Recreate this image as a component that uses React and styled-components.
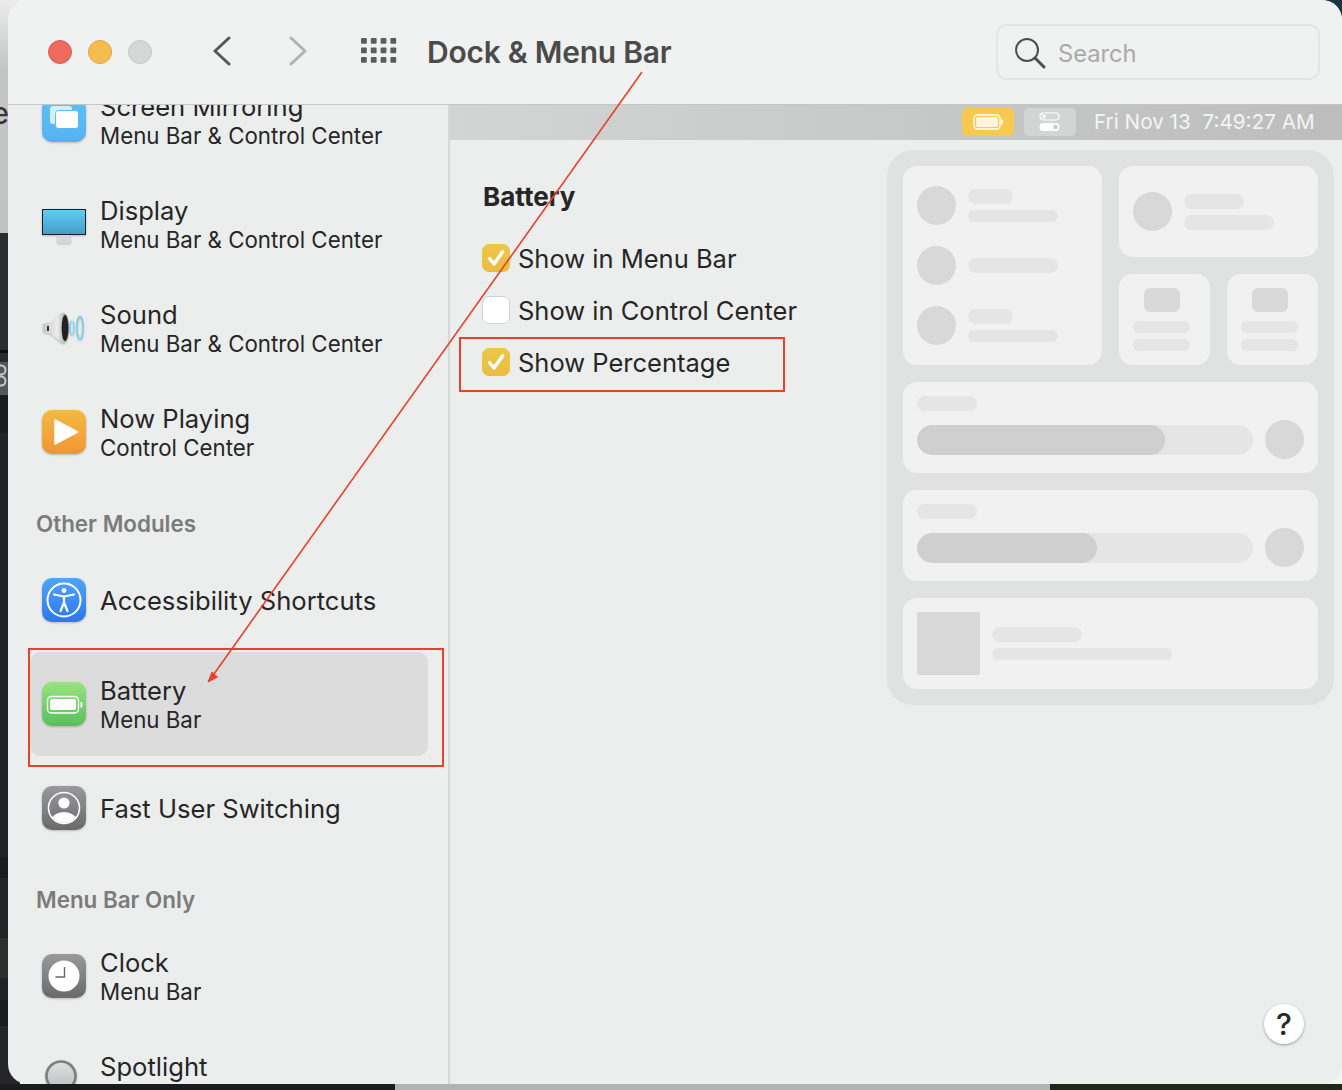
import styled, { createGlobalStyle } from "styled-components"

const GlobalStyle = createGlobalStyle`
  html, body {
    margin: 0;
    padding: 0;
    background: #1f1f21;
    font-family: Inter, "Noto Sans", sans-serif;
    -webkit-font-smoothing: antialiased;
  }
  * {
    box-sizing: border-box;
  }
`

const Desktop = styled.div`
  position: relative;
  width: 1342px;
  height: 1090px;
  overflow: hidden;
  padding-left: 8px;
  background: linear-gradient(225deg, #1c3440 0, #1c3440 24px, #f4f4f4 24px);
`

const BackdropLeft = styled.div`
  position: absolute;
  left: 0;
  top: 0;
  bottom: 0;
  width: 20px;
  display: flex;
  flex-direction: column;
`

const BackdropBand = styled.div`
  height: ${(p) => p.$h}px;
  background: ${(p) => p.$bg};
  flex: ${(p) => (p.$grow ? 1 : "none")};
  overflow: hidden;
`

const StrayLetter = styled.span`
  display: block;
  margin: 96px 0 0 -9px;
  font-size: 31px;
  line-height: 34px;
  color: #333;
`

const BackdropBottom = styled.div`
  position: absolute;
  left: 0;
  right: 0;
  bottom: 0;
  height: 6px;
  display: flex;
`

const BottomPiece = styled.div`
  width: ${(p) => (p.$w ? `${p.$w}px` : "auto")};
  flex: ${(p) => (p.$w ? "none" : 1)};
  background: ${(p) => p.$bg};
`

const Window = styled.div`
  position: relative;
  width: 1334px;
  height: 1084px;
  border-radius: 20px;
  overflow: hidden;
  background: #eceeed;
  display: flex;
  flex-direction: column;
  color: #262626;
`

const TitleBar = styled.header`
  height: 105px;
  flex: none;
  display: flex;
  align-items: center;
  background: #f0f2f1;
  border-bottom: 1px solid #c4c5c5;
  padding: 0 22px 1px 40px;
`

const TrafficLights = styled.div`
  display: flex;
  gap: 16px;
  margin-right: 60px;
`

const Light = styled.span`
  width: 24px;
  height: 24px;
  border-radius: 50%;
  background: ${(p) => p.$color};
  border: 1px solid ${(p) => p.$edge};
`

const NavIcon = styled.svg`
  display: block;
  flex: none;
  margin-top: -2px;
  margin-right: ${(p) => p.$gap}px;
`

const WindowTitle = styled.h1`
  margin: 0;
  font-size: 30px;
  font-weight: 600;
  color: #4b4b4b;
  letter-spacing: -0.25px;
`

const SearchBox = styled.div`
  margin-left: auto;
  width: 324px;
  height: 56px;
  margin-top: 1px;
  border: 2px solid #e4e6e5;
  border-radius: 11px;
  display: flex;
  align-items: center;
  padding: 2px 0 0 16px;
  gap: 12px;
  color: #a9a9a9;
  font-size: 23.7px;
`

const Body = styled.div`
  flex: 1;
  min-height: 0;
  display: flex;
`

const Sidebar = styled.nav`
  width: 442px;
  flex: none;
  overflow: hidden;
  border-right: 2px solid #d6d8d7;
`

const SidebarList = styled.div`
  margin-top: -37px;
`

const Row = styled.div`
  height: 104px;
  margin: 0 20px 0 22px;
  padding-left: 12px;
  border-radius: 10px;
  display: flex;
  align-items: center;
  gap: 14px;
  background: ${(p) => (p.$active ? "#dcdcdc" : "transparent")};
`

const RowIcon = styled.svg`
  display: block;
  flex: none;
  width: 44px;
  height: 44px;
  overflow: visible;
  filter: drop-shadow(0 1px 1px rgba(0, 0, 0, 0.22));
`

const RowText = styled.div`
  display: flex;
  flex-direction: column;
`

const RowTitle = styled.div`
  font-size: 25.6px;
  line-height: 32px;
  padding-top: 1px;
  color: #262626;
`

const RowSub = styled.div`
  font-size: 22.3px;
  line-height: 27px;
  margin: -1px 0 1px;
  color: #262626;
`

const GroupLabel = styled.div`
  height: 64px;
  padding: 26px 0 0 28px;
  font-size: 22.4px;
  line-height: 28px;
  font-weight: 600;
  color: #7a7b7b;
`

const Main = styled.main`
  flex: 1;
  min-width: 0;
  display: flex;
  flex-direction: column;
`

const MenuStrip = styled.div`
  height: 35px;
  flex: none;
  display: flex;
  align-items: center;
  padding: 0 0 2px 512px;
  background: linear-gradient(90deg, #d3d5d4, #bcbdbc);
  color: #f5f5f5;
  font-size: 20.7px;
`

const StripChip = styled.div`
  width: 52px;
  height: 28px;
  border-radius: 5px;
  margin-right: ${(p) => p.$gap}px;
  background: ${(p) => p.$bg};
  display: flex;
  align-items: center;
  justify-content: center;
`

const StripClock = styled.div`
  white-space: pre;
`

const Content = styled.div`
  flex: 1;
  min-height: 0;
  display: flex;
  padding: 10px 8px 0 32px;
`

const Settings = styled.section`
  flex: 1;
  padding-top: 29px;
`

const SectionTitle = styled.h2`
  margin: 0 0 17px 1px;
  font-size: 26px;
  line-height: 36px;
  font-weight: 700;
  color: #262626;
`

const CheckRow = styled.label`
  height: 52px;
  display: flex;
  align-items: center;
  gap: 8px;
  font-size: 25.5px;
  color: #262626;
`

const CheckBox = styled.span`
  width: 28px;
  height: 28px;
  border-radius: 7px;
  flex: none;
  display: flex;
  align-items: center;
  justify-content: center;
  background: ${(p) => (p.$on ? "linear-gradient(#edc74a, #eabd42)" : "#fff")};
  border: ${(p) => (p.$on ? "none" : "1px solid #d0d1d1")};
`

const Preview = styled.aside`
  width: 447px;
  height: 555px;
  flex: none;
  padding: 16px;
  border-radius: 26px;
  background: #e0e2e1;
  display: flex;
  flex-direction: column;
  gap: 17px;
`

const PreviewTop = styled.div`
  display: flex;
  gap: 17px;
`

const PreviewColumn = styled.div`
  width: 199px;
  display: flex;
  flex-direction: column;
  gap: 17px;
`

const PreviewRow = styled.div`
  display: flex;
  gap: 17px;
`

const Card = styled.div`
  background: #f1f1f1;
  border-radius: 14px;
  width: ${(p) => (p.$w ? `${p.$w}px` : "auto")};
  height: ${(p) => p.$h || 91}px;
  padding: 14px;
`

const NetworkCard = styled(Card)`
  display: flex;
  flex-direction: column;
  justify-content: space-between;
  padding: 20px 14px;
`

const CardLine = styled.div`
  display: flex;
  align-items: center;
  gap: 12px;
`

const ControlCard = styled(Card)`
  display: flex;
  align-items: center;
  gap: 12px;
  padding: 0 14px;
`

const Dot = styled.div`
  width: 39px;
  height: 39px;
  border-radius: 50%;
  background: #d8d8d8;
  flex: none;
`

const PillStack = styled.div`
  display: flex;
  flex-direction: column;
  gap: 6px;
`

const Pill = styled.div`
  width: ${(p) => p.$w}px;
  height: ${(p) => p.$h || 15}px;
  border-radius: 8px;
  background: #e5e5e5;
`

const TileCard = styled(Card)`
  padding: 14px 0 0 14px;
`

const Tile = styled.div`
  width: 36px;
  height: 24px;
  border-radius: 6px;
  background: #d8d8d8;
  margin: 0 0 9px 11px;
`

const SliderRow = styled.div`
  display: flex;
  align-items: center;
  gap: 12px;
  margin-top: 9px;
`

const Track = styled.div`
  width: 336px;
  height: 30px;
  border-radius: 15px;
  background: #e5e5e5;
  overflow: hidden;
`

const TrackFill = styled.div`
  width: ${(p) => p.$w}px;
  height: 30px;
  border-radius: 15px;
  background: #cfcfcf;
`

const MediaCard = styled(Card)`
  display: flex;
  align-items: center;
  gap: 12px;
`

const Artwork = styled.div`
  width: 63px;
  height: 63px;
  border-radius: 2px;
  background: #d8d8d8;
  flex: none;
`

const HelpButton = styled.div`
  position: absolute;
  right: 38px;
  bottom: 40px;
  width: 40px;
  height: 40px;
  border-radius: 50%;
  background: #fff;
  box-shadow: 0 1px 3px rgba(0, 0, 0, 0.35);
  display: flex;
  align-items: center;
  justify-content: center;
  font-size: 30px;
  font-weight: 500;
  color: #2a2a2a;
`

const RedBox = styled.div`
  position: absolute;
  left: ${(p) => p.$x}px;
  top: ${(p) => p.$y}px;
  width: ${(p) => p.$w}px;
  height: ${(p) => p.$h}px;
  border: 2px solid #e8412a;
  pointer-events: none;
`

const ArrowLayer = styled.svg`
  position: absolute;
  left: 0;
  top: 0;
  width: 1342px;
  height: 1090px;
  pointer-events: none;
`

function Check() {
  return (
    <svg width="22" height="22" viewBox="0 0 22 22" fill="none">
      <path d="M4.5 11.5 L9 17 L17.5 5" stroke="#fff" strokeWidth="3.4" strokeLinecap="round" strokeLinejoin="round" />
    </svg>
  )
}

function ScreenMirroringIcon() {
  return (
    <RowIcon viewBox="0 0 44 44">
      <defs>
        <linearGradient id="mirror" x1="0" y1="0" x2="0" y2="1">
          <stop offset="0" stopColor="#5cc0f7" />
          <stop offset="1" stopColor="#55b2f3" />
        </linearGradient>
      </defs>
      <rect width="44" height="44" rx="10" fill="url(#mirror)" />
      <rect x="8" y="8" width="22" height="18" rx="3" fill="#fff" fillOpacity="0.75" />
      <rect x="13.5" y="12.5" width="23" height="18" rx="3" fill="#fff" stroke="#5cb8f5" strokeWidth="1" />
    </RowIcon>
  )
}

function DisplayIcon() {
  return (
    <RowIcon viewBox="0 0 44 44">
      <defs>
        <linearGradient id="screen" x1="0" y1="0" x2="0" y2="1">
          <stop offset="0" stopColor="#62cdf6" />
          <stop offset="1" stopColor="#439cc8" />
        </linearGradient>
      </defs>
      <rect x="15.5" y="33" width="13" height="8" fill="#d5d6d6" />
      <rect x="0.5" y="7.5" width="43" height="25" fill="url(#screen)" stroke="#16202a" />
    </RowIcon>
  )
}

function SoundIcon() {
  return (
    <RowIcon viewBox="0 0 44 44">
      <defs>
        <linearGradient id="cone" x1="0" y1="0" x2="1" y2="0">
          <stop offset="0" stopColor="#c6c6c6" />
          <stop offset="0.55" stopColor="#ececec" />
          <stop offset="1" stopColor="#8f8f8f" />
        </linearGradient>
      </defs>
      <path d="M1 18 L9 16 L20 7 C24 5 27 12 27 22 C27 32 24 39 20 37 L9 28 L1 26 Z" fill="url(#cone)" />
      <rect x="5" y="20" width="2" height="5" fill="#333" />
      <ellipse cx="23" cy="22" rx="3.4" ry="13" fill="#222" />
      <ellipse cx="30" cy="22" rx="2" ry="7" fill="#c5e8f4" stroke="#6fcbe8" />
      <ellipse cx="38" cy="22" rx="3" ry="11.5" fill="none" stroke="#6fcbe8" strokeWidth="1.4" />
    </RowIcon>
  )
}

function NowPlayingIcon() {
  return (
    <RowIcon viewBox="0 0 44 44">
      <defs>
        <linearGradient id="playing" x1="0" y1="0" x2="0" y2="1">
          <stop offset="0" stopColor="#f2bb45" />
          <stop offset="1" stopColor="#f29532" />
        </linearGradient>
      </defs>
      <rect width="44" height="44" rx="10" fill="url(#playing)" />
      <path d="M13 10 V34 L35.5 22 Z" fill="#fff" stroke="#fff" strokeWidth="1.5" strokeLinejoin="round" />
    </RowIcon>
  )
}

function AccessibilityIcon() {
  return (
    <RowIcon viewBox="0 0 44 44">
      <defs>
        <linearGradient id="access" x1="0" y1="0" x2="0" y2="1">
          <stop offset="0" stopColor="#50a4f8" />
          <stop offset="1" stopColor="#2b78ee" />
        </linearGradient>
      </defs>
      <rect width="44" height="44" rx="10" fill="url(#access)" />
      <circle cx="22" cy="22" r="16.5" fill="none" stroke="#fff" strokeWidth="2" />
      <circle cx="22" cy="12.5" r="2.4" fill="#fff" />
      <path d="M12 16.5 L22 18.5 L32 16.5 M22 18.5 V24.5 M22 24.5 L18.5 33 M22 24.5 L25.5 33" fill="none" stroke="#fff" strokeWidth="2.2" strokeLinecap="round" strokeLinejoin="round" />
    </RowIcon>
  )
}

function BatteryIcon() {
  return (
    <RowIcon viewBox="0 0 44 44">
      <defs>
        <linearGradient id="batt" x1="0" y1="0" x2="0" y2="1">
          <stop offset="0" stopColor="#97e47e" />
          <stop offset="1" stopColor="#5cbd5e" />
        </linearGradient>
      </defs>
      <rect width="44" height="44" rx="10" fill="url(#batt)" />
      <rect x="5.5" y="14.5" width="31" height="16.5" rx="4" fill="none" stroke="#fff" strokeWidth="1.4" />
      <rect x="8" y="17" width="26" height="11" rx="2" fill="#fff" />
      <path d="M39 20 C40.5 21 40.5 24.5 39 25.5 Z" fill="#fff" stroke="#fff" />
    </RowIcon>
  )
}

function UserIcon() {
  return (
    <RowIcon viewBox="0 0 44 44">
      <defs>
        <linearGradient id="user" x1="0" y1="0" x2="0" y2="1">
          <stop offset="0" stopColor="#9a9a9c" />
          <stop offset="1" stopColor="#69696b" />
        </linearGradient>
        <clipPath id="userClip">
          <circle cx="22" cy="22" r="15" />
        </clipPath>
      </defs>
      <rect width="44" height="44" rx="10" fill="url(#user)" />
      <circle cx="22" cy="22" r="15.5" fill="none" stroke="#fff" strokeWidth="1.6" />
      <circle cx="22" cy="17" r="5.6" fill="#fff" />
      <ellipse cx="22" cy="35" rx="13" ry="9" fill="#fff" clipPath="url(#userClip)" />
    </RowIcon>
  )
}

function ClockIcon() {
  return (
    <RowIcon viewBox="0 0 44 44">
      <defs>
        <linearGradient id="clock" x1="0" y1="0" x2="0" y2="1">
          <stop offset="0" stopColor="#9a9a9c" />
          <stop offset="1" stopColor="#69696b" />
        </linearGradient>
      </defs>
      <rect width="44" height="44" rx="10" fill="url(#clock)" />
      <circle cx="22" cy="22" r="15.5" fill="#fff" />
      <path d="M22.5 13 V23 H13.5" fill="none" stroke="#666" strokeWidth="1.4" />
    </RowIcon>
  )
}

function SpotlightIcon() {
  return (
    <RowIcon viewBox="0 0 44 44">
      <defs>
        <linearGradient id="lens" x1="0" y1="0" x2="0" y2="1">
          <stop offset="0" stopColor="#dfe1e2" />
          <stop offset="1" stopColor="#bcbebe" />
        </linearGradient>
      </defs>
      <circle cx="19" cy="18" r="14.5" fill="url(#lens)" stroke="#7d7e7e" strokeWidth="2.6" />
    </RowIcon>
  )
}

const rowsTop = [
  { title: "Screen Mirroring", sub: "Menu Bar & Control Center", Icon: ScreenMirroringIcon },
  { title: "Display", sub: "Menu Bar & Control Center", Icon: DisplayIcon },
  { title: "Sound", sub: "Menu Bar & Control Center", Icon: SoundIcon },
  { title: "Now Playing", sub: "Control Center", Icon: NowPlayingIcon },
]

const rowsOther = [
  { title: "Accessibility Shortcuts", Icon: AccessibilityIcon },
  { title: "Battery", sub: "Menu Bar", Icon: BatteryIcon, active: true },
  { title: "Fast User Switching", Icon: UserIcon },
]

const rowsMenuBar = [
  { title: "Clock", sub: "Menu Bar", Icon: ClockIcon },
  { title: "Spotlight", sub: "Menu Bar", Icon: SpotlightIcon },
]

const backdropBands = [
  { h: 117, bg: "#2c2c2e" },
  { h: 3, bg: "#0c0c0c" },
  { h: 9, bg: "#2a2a2c" },
  { h: 33, bg: "#55565a", rings: true },
  { h: 38, bg: "#1b1b20" },
  { h: 424, bg: "#232325" },
  { h: 21, bg: "#1b1b1d" },
  { h: 60, bg: "#242426" },
  { h: 40, bg: "#2f2f30" },
  { h: 22, bg: "#232325" },
  { h: 26, bg: "#1b1b1d" },
]

function SidebarRow({ title, sub, Icon, active }) {
  return (
    <Row $active={active}>
      <Icon />
      <RowText>
        <RowTitle>{title}</RowTitle>
        {sub && <RowSub>{sub}</RowSub>}
      </RowText>
    </Row>
  )
}

function SliderCard({ fill }) {
  return (
    <Card>
      <Pill $w={60} />
      <SliderRow>
        <Track>
          <TrackFill $w={fill} />
        </Track>
        <Dot />
      </SliderRow>
    </Card>
  )
}

function PreviewTileCard() {
  return (
    <TileCard $w={91}>
      <Tile />
      <PillStack>
        <Pill $w={57} $h={12} />
        <Pill $w={57} $h={12} />
      </PillStack>
    </TileCard>
  )
}

export default function App() {
  return (
    <>
      <GlobalStyle />
      <Desktop>
        <BackdropLeft>
          <BackdropBand $h={233} $bg="linear-gradient(#ececec, #c4c4c4 30%, #c2c2c2)">
            <StrayLetter>e</StrayLetter>
          </BackdropBand>
          {backdropBands.map((band, i) => (
            <BackdropBand key={i} $h={band.h} $bg={band.bg}>
              {band.rings && (
                <svg width="20" height="33" viewBox="0 0 20 33" fill="none">
                  <circle cx="1" cy="8" r="4.5" stroke="#c9c9c9" strokeWidth="2" />
                  <circle cx="1" cy="19" r="4.5" stroke="#c9c9c9" strokeWidth="2" />
                </svg>
              )}
            </BackdropBand>
          ))}
          <BackdropBand $grow $bg="#262628" />
        </BackdropLeft>
        <BackdropBottom>
          <BottomPiece $w={395} $bg="#1b1b1d" />
          <BottomPiece $w={655} $bg="#b3b3b3" />
          <BottomPiece $bg="#23261c" />
        </BackdropBottom>

        <Window>
          <TitleBar>
            <TrafficLights>
              <Light $color="#ee6a5f" $edge="#d95c50" />
              <Light $color="#f5bd4f" $edge="#dfa63d" />
              <Light $color="#d6d7d7" $edge="#c6c7c7" />
            </TrafficLights>
            <NavIcon $gap={56} width="20" height="30" viewBox="0 0 20 30" fill="none">
              <path d="M17 2 L3 15 L17 28" stroke="#585858" strokeWidth="3" strokeLinecap="round" strokeLinejoin="round" />
            </NavIcon>
            <NavIcon $gap={53} width="20" height="30" viewBox="0 0 20 30" fill="none">
              <path d="M3 2 L17 15 L3 28" stroke="#b2b2b2" strokeWidth="3" strokeLinecap="round" strokeLinejoin="round" />
            </NavIcon>
            <NavIcon $gap={30} width="36" height="26" viewBox="0 0 36 26" fill="#5c5c5c">
              {[0, 9.5, 19].map((y) =>
                [0, 9.8, 19.6, 29.4].map((x) => <rect key={`${x}-${y}`} x={x} y={y} width="5.8" height="5.8" rx="1" />),
              )}
            </NavIcon>
            <WindowTitle>Dock &amp; Menu Bar</WindowTitle>
            <SearchBox>
              <svg width="32" height="32" viewBox="0 0 32 32" fill="none">
                <circle cx="13" cy="13" r="11" stroke="#4e4e4e" strokeWidth="2" />
                <path d="M21 21 L30 30" stroke="#4e4e4e" strokeWidth="3" strokeLinecap="round" />
              </svg>
              Search
            </SearchBox>
          </TitleBar>

          <Body>
            <Sidebar>
              <SidebarList>
                {rowsTop.map((row) => (
                  <SidebarRow key={row.title} {...row} />
                ))}
                <GroupLabel>Other Modules</GroupLabel>
                {rowsOther.map((row) => (
                  <SidebarRow key={row.title} {...row} />
                ))}
                <GroupLabel>Menu Bar Only</GroupLabel>
                {rowsMenuBar.map((row) => (
                  <SidebarRow key={row.title} {...row} />
                ))}
              </SidebarList>
            </Sidebar>

            <Main>
              <MenuStrip>
                <StripChip $gap={10} $bg="#f7c94f">
                  <svg width="30" height="16" viewBox="0 0 30 16" fill="none">
                    <rect x="1" y="1" width="26" height="14" rx="3.5" stroke="#fff" strokeWidth="1.4" />
                    <rect x="3" y="3" width="22" height="10" rx="2" fill="#fff5e0" />
                    <path d="M29 6 V10" stroke="#fff" strokeWidth="1.6" strokeLinecap="round" />
                  </svg>
                </StripChip>
                <StripChip $gap={18} $bg="#d3d4d4">
                  <svg width="22" height="20" viewBox="0 0 22 20" fill="none">
                    <rect x="1" y="1" width="19" height="7" rx="3.5" stroke="#fff" strokeWidth="1.2" />
                    <circle cx="5" cy="4.5" r="2" fill="#fff" />
                    <rect x="0.5" y="11" width="20" height="8" rx="4" fill="#fff" />
                    <circle cx="16.5" cy="15" r="2.2" fill="#c6c7c7" />
                  </svg>
                </StripChip>
                <StripClock>Fri Nov 13  7:49:27 AM</StripClock>
              </MenuStrip>

              <Content>
                <Settings>
                  <SectionTitle>Battery</SectionTitle>
                  <CheckRow>
                    <CheckBox $on>
                      <Check />
                    </CheckBox>
                    Show in Menu Bar
                  </CheckRow>
                  <CheckRow>
                    <CheckBox />
                    Show in Control Center
                  </CheckRow>
                  <CheckRow>
                    <CheckBox $on>
                      <Check />
                    </CheckBox>
                    Show Percentage
                  </CheckRow>
                </Settings>

                <Preview>
                  <PreviewTop>
                    <NetworkCard $w={199} $h={199}>
                      <CardLine>
                        <Dot />
                        <PillStack>
                          <Pill $w={45} />
                          <Pill $w={90} $h={12} />
                        </PillStack>
                      </CardLine>
                      <CardLine>
                        <Dot />
                        <Pill $w={90} />
                      </CardLine>
                      <CardLine>
                        <Dot />
                        <PillStack>
                          <Pill $w={45} />
                          <Pill $w={90} $h={12} />
                        </PillStack>
                      </CardLine>
                    </NetworkCard>
                    <PreviewColumn>
                      <ControlCard $w={199}>
                        <Dot />
                        <PillStack>
                          <Pill $w={60} />
                          <Pill $w={90} />
                        </PillStack>
                      </ControlCard>
                      <PreviewRow>
                        <PreviewTileCard />
                        <PreviewTileCard />
                      </PreviewRow>
                    </PreviewColumn>
                  </PreviewTop>
                  <SliderCard fill={248} />
                  <SliderCard fill={180} />
                  <MediaCard>
                    <Artwork />
                    <PillStack>
                      <Pill $w={90} />
                      <Pill $w={180} $h={12} />
                    </PillStack>
                  </MediaCard>
                </Preview>
              </Content>
            </Main>
          </Body>
          <HelpButton>?</HelpButton>
        </Window>

        <RedBox $x={28} $y={648} $w={416} $h={119} />
        <RedBox $x={459} $y={337} $w={326} $h={55} />
        <ArrowLayer viewBox="0 0 1342 1090" fill="none">
          <path d="M642 72 L214 674" stroke="#e8412a" strokeWidth="1.6" />
          <path d="M208 682 L212 672 L217.5 677 Z" fill="#e8412a" stroke="#e8412a" />
        </ArrowLayer>
      </Desktop>
    </>
  )
}
